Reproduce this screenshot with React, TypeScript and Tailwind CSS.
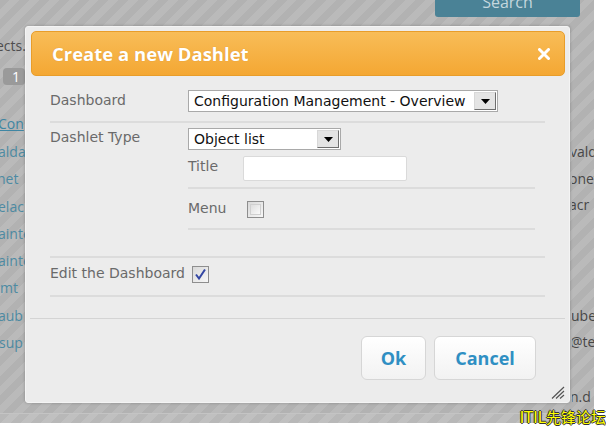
import React from "react";

const stripes =
  "bg-[image:repeating-linear-gradient(135deg,#b2b2b2_0px,#b2b2b2_7px,#bababa_7px,#bababa_14px)]";

function SelectBox({ value, width }: { value: string; width: string }) {
  return (
    <div
      className={`${width} h-[22px] bg-white border border-[#a9a9a9] flex items-center justify-between`}
    >
      <span className="pl-[5px] text-[14px] leading-none text-[#111] whitespace-nowrap">{value}</span>
      <span className="w-[22px] h-[18px] mr-[1px] bg-[#e4e4e4] border border-t-[#d8d8d8] border-l-[#d8d8d8] border-r-[#6e6e6e] border-b-[#6e6e6e] flex items-center justify-center">
        <svg width="9" height="5" viewBox="0 0 9 5">
          <path d="M0 0h9L4.5 5z" fill="#000" />
        </svg>
      </span>
    </div>
  );
}

function CheckBox({ checked }: { checked?: boolean }) {
  return (
    <span className="w-[17px] h-[17px] border border-[#8e8e8e] bg-[linear-gradient(135deg,#d9d9d9,#f7f7f7)] flex items-center justify-center">
      {checked ? (
        <svg width="13" height="13" viewBox="0 0 13 13">
          <path d="M2 6.5l3 4L11 1.5" fill="none" stroke="#3346a3" strokeWidth="2" />
        </svg>
      ) : (
        <span className="w-[11px] h-[11px] border border-[#d0d0d0] bg-[linear-gradient(135deg,#dedede,#fafafa)]" />
      )}
    </span>
  );
}

function Rule({ inner }: { inner?: boolean }) {
  return <div className={`h-[2px] bg-[#dcdcdc] ${inner ? "ml-[138px] mr-[10px]" : ""}`} />;
}

export default function App() {
  return (
    <div className="relative w-[606px] h-[429px] bg-white overflow-hidden font-['DejaVu_Sans',sans-serif]">
      {/* page behind the modal, dimmed by the striped overlay */}
      <div className={`w-[594px] h-[423px] ${stripes} flex flex-col`}>
        <div className="ml-[435px] w-[145px] h-[17px] bg-[#4a8296] rounded-b-[3px] flex justify-center overflow-hidden">
          <span className="-mt-[10px] text-[16px] text-[#c4d7de] font-['Open_Sans',sans-serif]">Search</span>
        </div>
        <div className="flex-1 flex justify-between font-['Open_Sans',sans-serif] text-[14px]">
          <div className="w-[25px] overflow-hidden flex flex-col">
            <span className="mt-[19px] leading-[20px] text-[#4e4e4e] -ml-[4px]">ects.</span>
            <span className="mt-[12px] ml-[3px] w-[22px] h-[17px] rounded-[4px] bg-[#9a9a9a] text-white text-[14px] leading-[17px] pl-[9px]">
              1
            </span>
            <span className="mt-[29px] leading-[20px] text-[#3f86a3] underline -ml-[2px]">Con</span>
            <div className="mt-[4px] flex flex-col leading-[27.3px] text-[#4d8aa2] whitespace-nowrap">
              <span className="-ml-[2px]">alda</span>
              <span className="-ml-[3px]">net</span>
              <span className="-ml-[2px]">elac</span>
              <span className="-ml-[2px]">ainte</span>
              <span className="-ml-[2px]">ainte</span>
              <span className="ml-[0px]">mt</span>
              <span className="-ml-[2px]">aub</span>
              <span className="-ml-[1px]">sup</span>
            </div>
          </div>
          <div className="w-[22px] overflow-hidden flex flex-col text-[#474747] whitespace-nowrap leading-[26.5px]">
            <span className="mt-[122px] -ml-[2px]">vald</span>
            <span className="-ml-[3px]">onet</span>
            <span className="-ml-[3px]">acr</span>
            <span className="mt-[84px] -ml-[1px]">ube</span>
            <span className="-ml-[2px]">@te</span>
            <span className="mt-[28px] -ml-[2px]">n.d</span>
          </div>
        </div>
        <div className="h-[10px] border-t border-[#c4c4c4] bg-[image:repeating-linear-gradient(135deg,#b8b8b8_0px,#b8b8b8_7px,#c0c0c0_7px,#c0c0c0_14px)]" />
      </div>

      {/* modal dialog */}
      <div className="absolute left-[25px] top-[26px] w-[545px] h-[377px] bg-[#ececec] border border-[#f4f4f4] rounded-[3px] shadow-[0_0_3px_rgba(0,0,0,0.25)] flex flex-col">
        <div className="mt-[4px] ml-[5px] mr-[4px] h-[45px] rounded-[5px] border border-[#e89d2a] bg-[linear-gradient(#f8bd58,#f4a733)] flex items-center justify-between pl-[20px] pr-[14px]">
          <span className="text-white font-bold text-[18.5px] font-['Open_Sans',sans-serif] [text-shadow:0_0_1px_rgba(160,90,0,0.4)]">
            Create a new Dashlet
          </span>
          <svg width="12" height="12" viewBox="0 0 12 12">
            <path d="M1.5 1.5l9 9M10.5 1.5l-9 9" stroke="#fff" strokeWidth="3" strokeLinecap="round" />
          </svg>
        </div>

        <div className="px-[24px] text-[14px] text-[#6a6a6a]">
          <div className="mt-[14px] flex items-center">
            <span className="w-[138px] leading-[20px] -mt-[2px]">Dashboard</span>
            <SelectBox value="Configuration Management - Overview" width="w-[310px]" />
          </div>
          <div className="mt-[9px]">
            <Rule />
          </div>
          <div className="mt-[5px] flex">
            <span className="w-[138px] leading-[20px] -mt-[1px]">Dashlet Type</span>
            <div className="flex flex-col">
              <SelectBox value="Object list" width="w-[153px]" />
              <div className="mt-[6px] flex items-center">
                <span className="w-[55px] leading-[20px] -mt-[6px]">Title</span>
                <div className="w-[164px] h-[25px] bg-white border border-[#dadada] rounded-[2px]" />
              </div>
            </div>
          </div>
          <div className="mt-[6px]">
            <Rule inner />
          </div>
          <div className="mt-[11px] flex items-center pl-[138px]">
            <span className="w-[59px] leading-[20px] -mt-[2px]">Menu</span>
            <CheckBox />
          </div>
          <div className="mt-[10px]">
            <Rule inner />
          </div>
          <div className="mt-[26px]">
            <Rule />
          </div>
          <div className="mt-[8px] flex items-center">
            <span className="leading-[20px] -mt-[3px]">Edit the Dashboard</span>
            <span className="ml-[7px]">
              <CheckBox checked />
            </span>
          </div>
          <div className="mt-[12px]">
            <Rule />
          </div>
        </div>

        <div className="mt-[21px] mx-[4px] h-px bg-[#d4d4d4]" />

        <div className="mt-[17px] flex justify-end gap-[8px] pr-[33px] font-['Open_Sans',sans-serif]">
          <button className="w-[65px] h-[44px] rounded-[6px] border border-[#d6d6d6] bg-[linear-gradient(#ffffff,#f2f2f2)] text-[18px] font-bold text-[#2f8fc3]">
            Ok
          </button>
          <button className="w-[102px] h-[44px] rounded-[6px] border border-[#d6d6d6] bg-[linear-gradient(#ffffff,#f2f2f2)] text-[18px] font-bold text-[#2f8fc3]">
            Cancel
          </button>
        </div>

        <div className="mt-[6px] mr-[4px] self-end">
          <svg width="14" height="13" viewBox="0 0 14 13">
            <path d="M13 1L1 12.5M13 5L5 12.5M13 9L9 12.5" stroke="#555" strokeWidth="1.2" />
          </svg>
        </div>
      </div>

      {/* forum watermark */}
      <div className="absolute right-0 bottom-[1px] text-[15px] leading-[19px] text-[#ffff00] font-['DejaVu_Sans','Noto_Sans_CJK_SC',sans-serif] [text-shadow:1px_0_0_#333,-1px_0_0_#333,0_1px_0_#333,0_-1px_0_#333]">
        ITIL先锋论坛
      </div>
    </div>
  );
}
